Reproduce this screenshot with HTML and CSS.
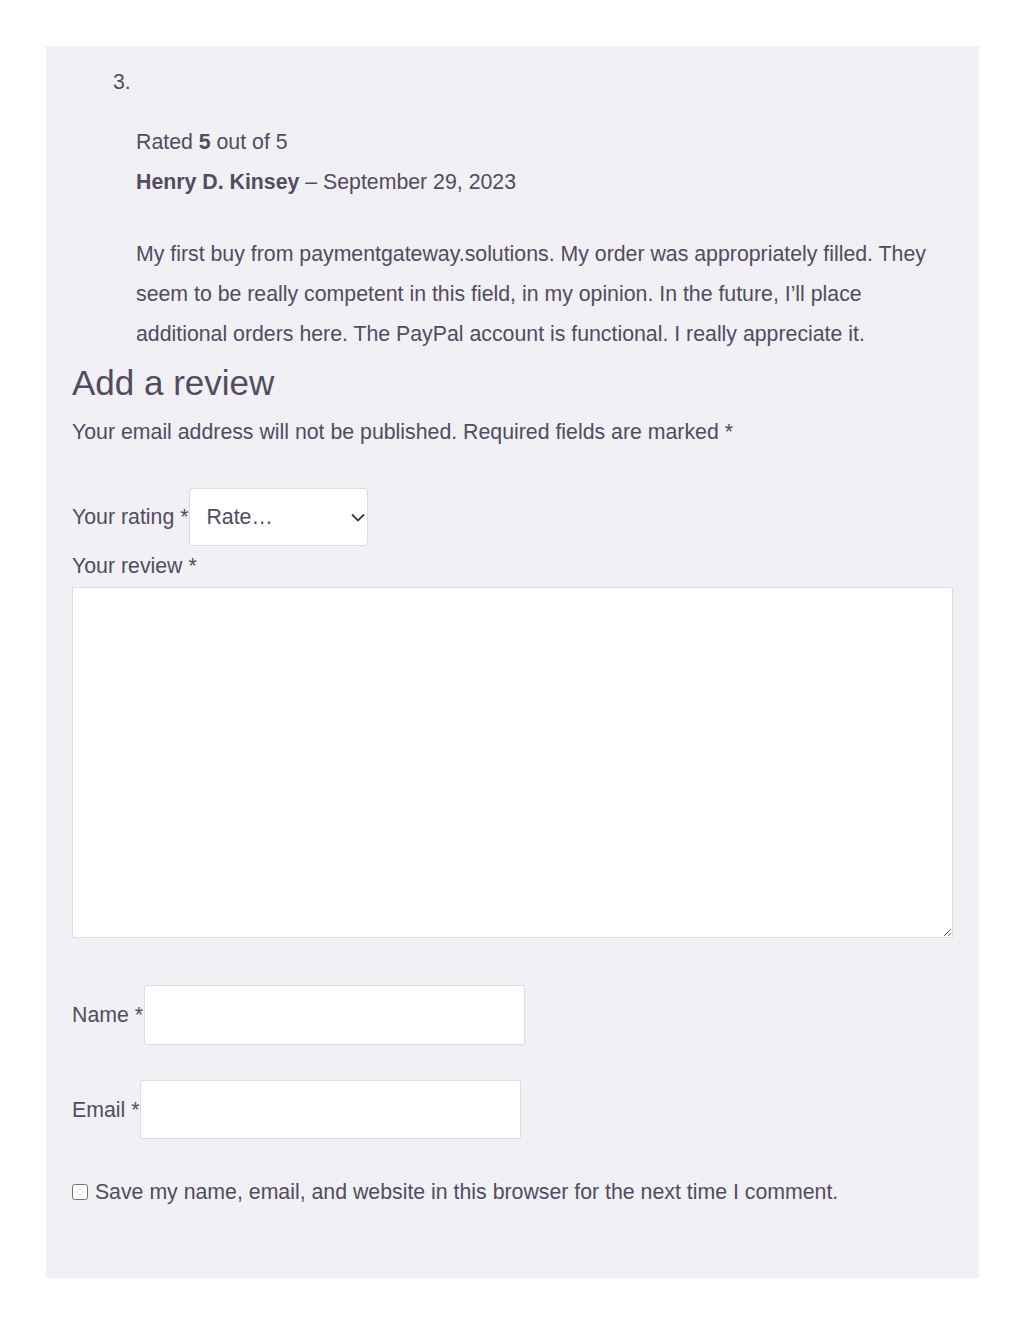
FILE: index.html
```html
<!DOCTYPE html>
<html lang="en">
<head>
    <meta charset="UTF-8">
    <meta name="viewport" content="width=device-width, initial-scale=1.0">
    <title>Reviews</title>
    <link rel="stylesheet" href="styles.css">
</head>
<body>

    <div class="reviews-panel">
        <ol class="commentlist">
            <li class="review">
                <span class="review-number">3.</span>
                <div class="comment-text">
                    <div class="star-rating">Rated <strong>5</strong> out of 5</div>
                    <p class="meta"><strong>Henry D. Kinsey</strong> &ndash; September 29, 2023</p>
                    <p class="description">My first buy from paymentgateway.solutions. My order was appropriately filled. They seem to be really competent in this field, in my opinion. In the future, I&rsquo;ll place additional orders here. The PayPal account is functional. I really appreciate it.</p>
                </div>
            </li>
        </ol>

        <div class="review-form">
            <h2>Add a review</h2>
            <p class="notes">Your email address will not be published. Required fields are marked *</p>

            <div class="rating-row">
                <label for="rating">Your rating *</label>
                <div class="select-wrap">
                    <select id="rating">
                        <option>Rate&hellip;</option>
                        <option>Perfect</option>
                        <option>Good</option>
                        <option>Average</option>
                        <option>Not that bad</option>
                        <option>Very poor</option>
                    </select>
                    <svg class="chevron" width="14" height="9" viewBox="0 0 14 9"><path d="M1 1.5l6 6 6-6" fill="none" stroke="#3c3a44" stroke-width="1.8"/></svg>
                </div>
            </div>

            <label for="comment" class="block-label">Your review *</label>
            <textarea id="comment"></textarea>

            <div class="field-row name-row">
                <label for="author">Name *</label>
                <input type="text" id="author">
            </div>

            <div class="field-row email-row">
                <label for="email">Email *</label>
                <input type="email" id="email">
            </div>

            <label class="cookies"><input type="checkbox" id="cookies"> Save my name, email, and website in this browser for the next time I comment.</label>
        </div>
    </div>

</body>
</html>
```

FILE: styles.css
```css
body {
    font-family: "Liberation Sans", Arial, sans-serif;
    background-color: #ffffff;
    color: #514c62;
    margin: 0;
    padding: 46px 45px 46px 46px;
}
.reviews-panel {
    background-color: #f1f0f5;
    padding: 16px 26px 66px 26px;
    font-size: 21.3px;
    line-height: 40px;
}
.commentlist {
    list-style: none;
    margin: 0;
    padding: 0;
}
.review-number {
    display: block;
    padding-left: 41px;
}
.comment-text {
    padding-left: 64px;
    padding-top: 20px;
}
.star-rating {
    margin: 0;
}
.meta {
    margin: 0;
}
.description {
    margin: 32px 0 0 0;
}
.review-form h2 {
    font-size: 35px;
    font-weight: normal;
    line-height: 42px;
    margin: 8px 0 8px 0;
}
.notes {
    margin: 0;
}
.rating-row {
    display: flex;
    align-items: center;
    margin-top: 36px;
}
.select-wrap {
    position: relative;
    margin-left: 1px;
}
.select-wrap select {
    appearance: none;
    -webkit-appearance: none;
    width: 179px;
    height: 58px;
    padding: 0 16px;
    font-family: inherit;
    font-size: 21.3px;
    color: #514c62;
    background-color: #ffffff;
    border: 1px solid #dddce2;
    border-radius: 3px;
}
.chevron {
    position: absolute;
    right: 3px;
    top: 25px;
    pointer-events: none;
}
.block-label {
    display: block;
}
textarea {
    display: block;
    width: 100%;
    height: 351px;
    box-sizing: border-box;
    margin: 1px 0 0 0;
    border: 1px solid #dddce2;
    background-color: #ffffff;
    font-family: inherit;
    font-size: 20px;
}
.field-row {
    display: flex;
    align-items: center;
}
.field-row label {
    margin-right: 1px;
}
.field-row input {
    width: 381px;
    height: 60px;
    box-sizing: border-box;
    border: 1px solid #dddce2;
    border-radius: 2px;
    background-color: #ffffff;
    font-family: inherit;
    font-size: 20px;
    padding: 0 12px;
}
.name-row {
    margin-top: 47px;
}
.email-row {
    margin-top: 35px;
}
.email-row input {
    height: 59px;
}
.cookies {
    display: block;
    margin-top: 33px;
}
.cookies input {
    width: 16px;
    height: 16px;
    margin: 0 1px 0 0;
    vertical-align: -1px;
}
```
